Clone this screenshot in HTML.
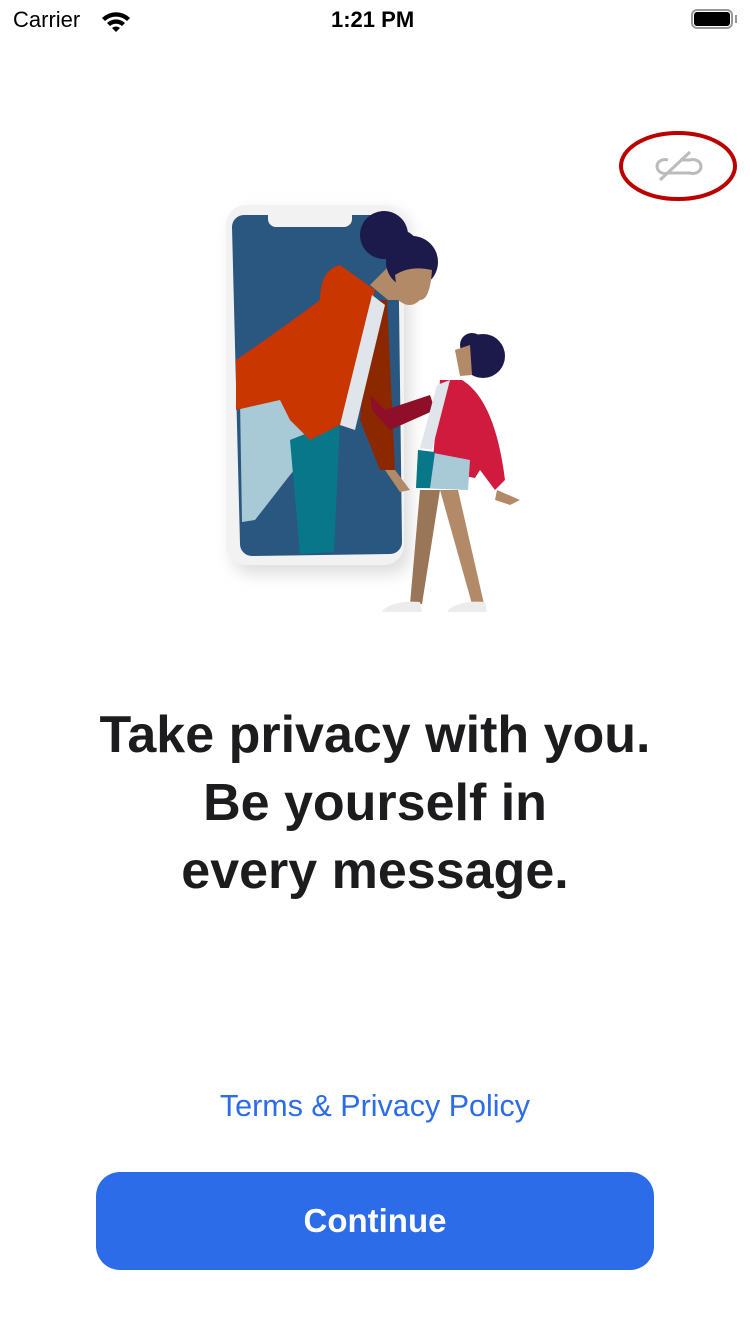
<!DOCTYPE html>
<html><head><meta charset="utf-8"><style>
body{margin:0;width:750px;height:1334px;background:#fff;position:relative;overflow:hidden;font-family:"Liberation Sans",sans-serif}
.sb{position:absolute;top:7px;font-size:22px;color:#000}
h1{position:absolute;top:701px;left:0;width:750px;margin:0;text-align:center;font-size:52px;line-height:68px;font-weight:bold;color:#1c1c1e;letter-spacing:0px}
.terms{position:absolute;top:1089px;left:0;width:750px;text-align:center;color:#2c6ce8;font-size:30.5px}
.btn{position:absolute;left:96px;top:1172px;width:558px;height:98px;border-radius:24px;background:#2c6ce8;color:#fff;font-size:33px;font-weight:bold;text-align:center;line-height:98px}
</style></head><body>
<div class="sb" style="left:13px">Carrier</div>
<svg style="position:absolute;left:100px;top:9px" width="32" height="24" viewBox="0 0 32 24"><path d="M2 9 A20 20 0 0 1 30 9 L27 12 A16 16 0 0 0 5 12Z M7 14 A13 13 0 0 1 25 14 L22 17 A9 9 0 0 0 10 17Z M12 19 A6 6 0 0 1 20 19 L16 23Z" fill="#000"/></svg>
<div class="sb" style="left:331px;font-weight:bold">1:21 PM</div>
<div style="position:absolute;left:691px;top:9px;width:42px;height:20px;border:2px solid #999;border-radius:6px;box-sizing:border-box"></div>
<div style="position:absolute;left:694px;top:12px;width:36px;height:14px;background:#000;border-radius:3px"></div>
<div style="position:absolute;left:735px;top:15px;width:2px;height:8px;background:#999"></div>

<svg style="position:absolute;left:0;top:0" width="750" height="650">
<ellipse cx="678" cy="166" rx="57" ry="33" fill="none" stroke="#b00" stroke-width="4"/>
<path d="M668 160 a8 7 0 1 0 0 13 h22 a8 7 0 1 0 0 -13 h-10" fill="none" stroke="#bbb" stroke-width="3"/>
<line x1="660" y1="180" x2="690" y2="152" stroke="#bbb" stroke-width="3"/>
<defs><filter id="sh"><feGaussianBlur stdDeviation="8"/></filter></defs>
<rect x="232" y="212" width="178" height="362" rx="20" fill="#ddd" filter="url(#sh)"/>
<rect x="226" y="205" width="178" height="360" rx="20" fill="#f2f2f2"/>
<path d="M244 215 H268 v4 a8 8 0 0 0 8 8 h68 a8 8 0 0 0 8 -8 v-4 H388 a10 10 0 0 1 10 10 L402 542 a12 12 0 0 1 -12 12 L252 556 a12 12 0 0 1 -12 -12 L232 227 a12 12 0 0 1 12 -12Z" fill="#29577f"/>
<path d="M240 400 L300 380 L320 440 L290 475 L255 520 L242 522Z" fill="#a7cad6"/>
<path d="M290 440 L340 420 L334 552 L300 554Z" fill="#087789"/>
<path d="M236 360 Q280 330 320 300 Q320 270 340 265 L375 290 L350 420 L310 440 L290 420 L280 400 L236 410Z" fill="#c93600"/>
<path d="M370 300 L387 300 L395 470 L380 470 L360 420Z" fill="#8b2800"/>
<path d="M372 295 L385 305 L355 430 L340 425Z" fill="#e0e5ec"/>
<path d="M385 470 L395 470 L410 490 L400 492Z" fill="#b38a67"/>
<path d="M370 285 L395 260 L420 300 Q410 310 398 300 L388 300Z" fill="#b38a67"/>
<circle cx="384" cy="235" r="24" fill="#1b1a4b"/><circle cx="412" cy="262" r="26" fill="#1b1a4b"/><circle cx="400" cy="248" r="18" fill="#1b1a4b"/>
<path d="M395 275 Q410 265 432 270 Q430 300 420 300 Q405 305 398 300Z" fill="#b38a67"/>
<circle cx="483" cy="356" r="22" fill="#1b1a4b"/><circle cx="472" cy="345" r="12" fill="#1b1a4b"/>
<path d="M455 350 L470 345 L472 375 L460 376Z" fill="#b38a67"/>
<path d="M370 395 L385 410 L430 395 L435 410 L390 430 L372 410Z" fill="#8f0e29"/>
<path d="M440 380 L462 380 Q495 400 505 480 L495 490 L480 470 L475 478 L432 470Z" fill="#d01a3e"/>
<path d="M437 385 L450 380 L432 450 L420 448Z" fill="#e0e5ec"/>
<path d="M418 450 L470 460 L468 490 L416 488Z" fill="#a7cad6"/>
<path d="M418 450 L435 452 L430 488 L416 488Z" fill="#087789"/>
<path d="M420 490 L440 490 L422 604 L410 604Z" fill="#9a7658"/>
<path d="M440 490 L458 490 L484 604 L472 604Z" fill="#b38a67"/>
<path d="M497 490 L520 500 L510 505 L495 500Z" fill="#b38a67"/>
<path d="M383 610 Q395 600 420 602 L422 612 L383 612Z M448 610 Q460 600 485 602 L487 612 L448 612Z" fill="#ececec"/>
</svg>

<h1>Take privacy with you.<br>Be yourself in<br>every message.</h1>
<div class="terms">Terms &amp; Privacy Policy</div>
<div class="btn">Continue</div>
</body></html>
